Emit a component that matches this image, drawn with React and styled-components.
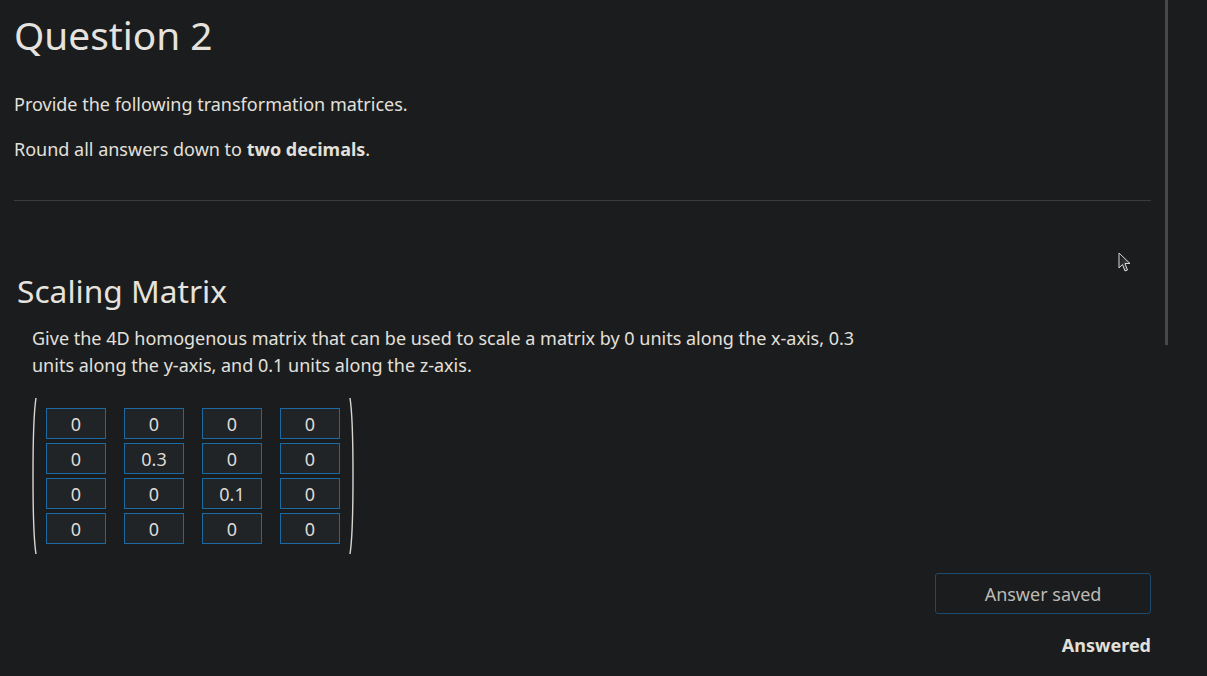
import React from 'react';
import styled, { createGlobalStyle } from 'styled-components';

const matriz = [
    ['0', '0', '0', '0'],
    ['0', '0.3', '0', '0'],
    ['0', '0', '0.1', '0'],
    ['0', '0', '0', '0'],
];

export default function App() {
    return (
        <>
            <GlobalStyle />
            <Page>
                <Content>
                    <Title>Question 2</Title>
                    <Paragraph>Provide the following transformation matrices.</Paragraph>
                    <Paragraph>Round all answers down to <b>two decimals</b>.</Paragraph>
                    <Divider />
                    <Section>
                        <SectionTitle>Scaling Matrix</SectionTitle>
                        <Description>
                            Give the 4D homogenous matrix that can be used to scale a matrix by 0 units along the x-axis, 0.3 units along the y-axis, and 0.1 units along the z-axis.
                        </Description>
                        <MatrixWrap>
                            <Paren />
                            <Grid>
                                {matriz.flat().map((valor, index) => (
                                    <Cell key={index} defaultValue={valor} />
                                ))}
                            </Grid>
                            <Paren right />
                        </MatrixWrap>
                        <Footer>
                            <SaveButton>Answer saved</SaveButton>
                            <Status>Answered</Status>
                        </Footer>
                    </Section>
                </Content>
                <ScrollThumb />
                <Cursor />
            </Page>
        </>
    )
}

function Paren({ right }) {
    return (
        <ParenSvg width="10" height="158" viewBox="0 0 10 158" right={right ? 1 : 0}>
            <path d="M6 1 Q3 20 3 79 Q3 138 6 157" fill="none" stroke="#d9d6d1" strokeWidth="1.4" />
        </ParenSvg>
    )
}

function Cursor() {
    return (
        <CursorSvg width="14" height="22" viewBox="0 0 14 22">
            <defs>
                <linearGradient id="cg" x1="0" y1="0" x2="1" y2="1">
                    <stop offset="0" stopColor="#111" />
                    <stop offset="1" stopColor="#555" />
                </linearGradient>
            </defs>
            <path d="M1 1 L1 16 L4.5 12.5 L7 19 L9.5 18 L7 11.5 L12 11.5 Z" fill="url(#cg)" stroke="#d8d8d8" strokeWidth="1" strokeLinejoin="round" />
        </CursorSvg>
    )
}

const GlobalStyle = createGlobalStyle`
    body {
        margin: 0;
        background: #1b1c1e;
        font-family: "Noto Sans", "Open Sans", sans-serif;
        color: #e3e0db;
    }
`

const Page = styled.div`
    position: relative;
    width: 1207px;
    height: 676px;
    overflow: hidden;
`

const Content = styled.div`
    width: 1137px;
    padding: 12px 0 0 14px;
`

const Title = styled.h1`
    margin: 0 0 32px;
    font-size: 38.8px;
    line-height: 47px;
    font-weight: 400;
    color: #e6e3de;
`

const Paragraph = styled.p`
    margin: 0 0 18px;
    font-size: 18px;
    line-height: 27px;

    b {
        font-weight: 700;
    }
`

const Divider = styled.hr`
    margin: 37px 0 0;
    border: none;
    border-top: 1px solid #3a3b3e;
    height: 0;
`

const Section = styled.div`
    padding: 70px 0 0 3px;
`

const SectionTitle = styled.h2`
    margin: 0;
    font-size: 31.7px;
    line-height: 40px;
    font-weight: 400;
    color: #e6e3de;
`

const Description = styled.p`
    margin: 14px 0 0 15px;
    width: 830px;
    font-size: 18px;
    line-height: 27px;
`

const MatrixWrap = styled.div`
    display: flex;
    align-items: center;
    margin: 18px 0 0 13px;
`

const ParenSvg = styled.svg`
    display: block;
    transform: ${props => props.right ? 'scaleX(-1)' : 'none'};
`

const Grid = styled.div`
    display: grid;
    grid-template-columns: repeat(4, 60px);
    grid-auto-rows: 31px;
    column-gap: 18px;
    row-gap: 4px;
    margin: 0 6px 0 6px;
`

const Cell = styled.input`
    box-sizing: border-box;
    width: 60px;
    height: 31px;
    border: 1px solid #1b6aa3;
    background: #202426;
    color: #dedbd6;
    font-family: "Noto Sans", "Open Sans", sans-serif;
    font-size: 18px;
    text-align: center;
    padding: 0;
    outline: none;
`

const Footer = styled.div`
    display: flex;
    flex-direction: column;
    align-items: flex-end;
    margin-top: 18px;
`

const SaveButton = styled.button`
    width: 216px;
    height: 41px;
    border: 1px solid #1d4b6f;
    border-radius: 3px;
    background: transparent;
    color: #bdbab5;
    font-family: "Noto Sans", "Open Sans", sans-serif;
    font-size: 18px;
`

const Status = styled.div`
    margin-top: 18px;
    font-size: 18px;
    line-height: 27px;
    font-weight: 700;
`

const ScrollThumb = styled.div`
    position: absolute;
    top: 0;
    left: 1165px;
    width: 3px;
    height: 345px;
    background: #44494c;
`

const CursorSvg = styled.svg`
    position: absolute;
    left: 1118px;
    top: 252px;
`
